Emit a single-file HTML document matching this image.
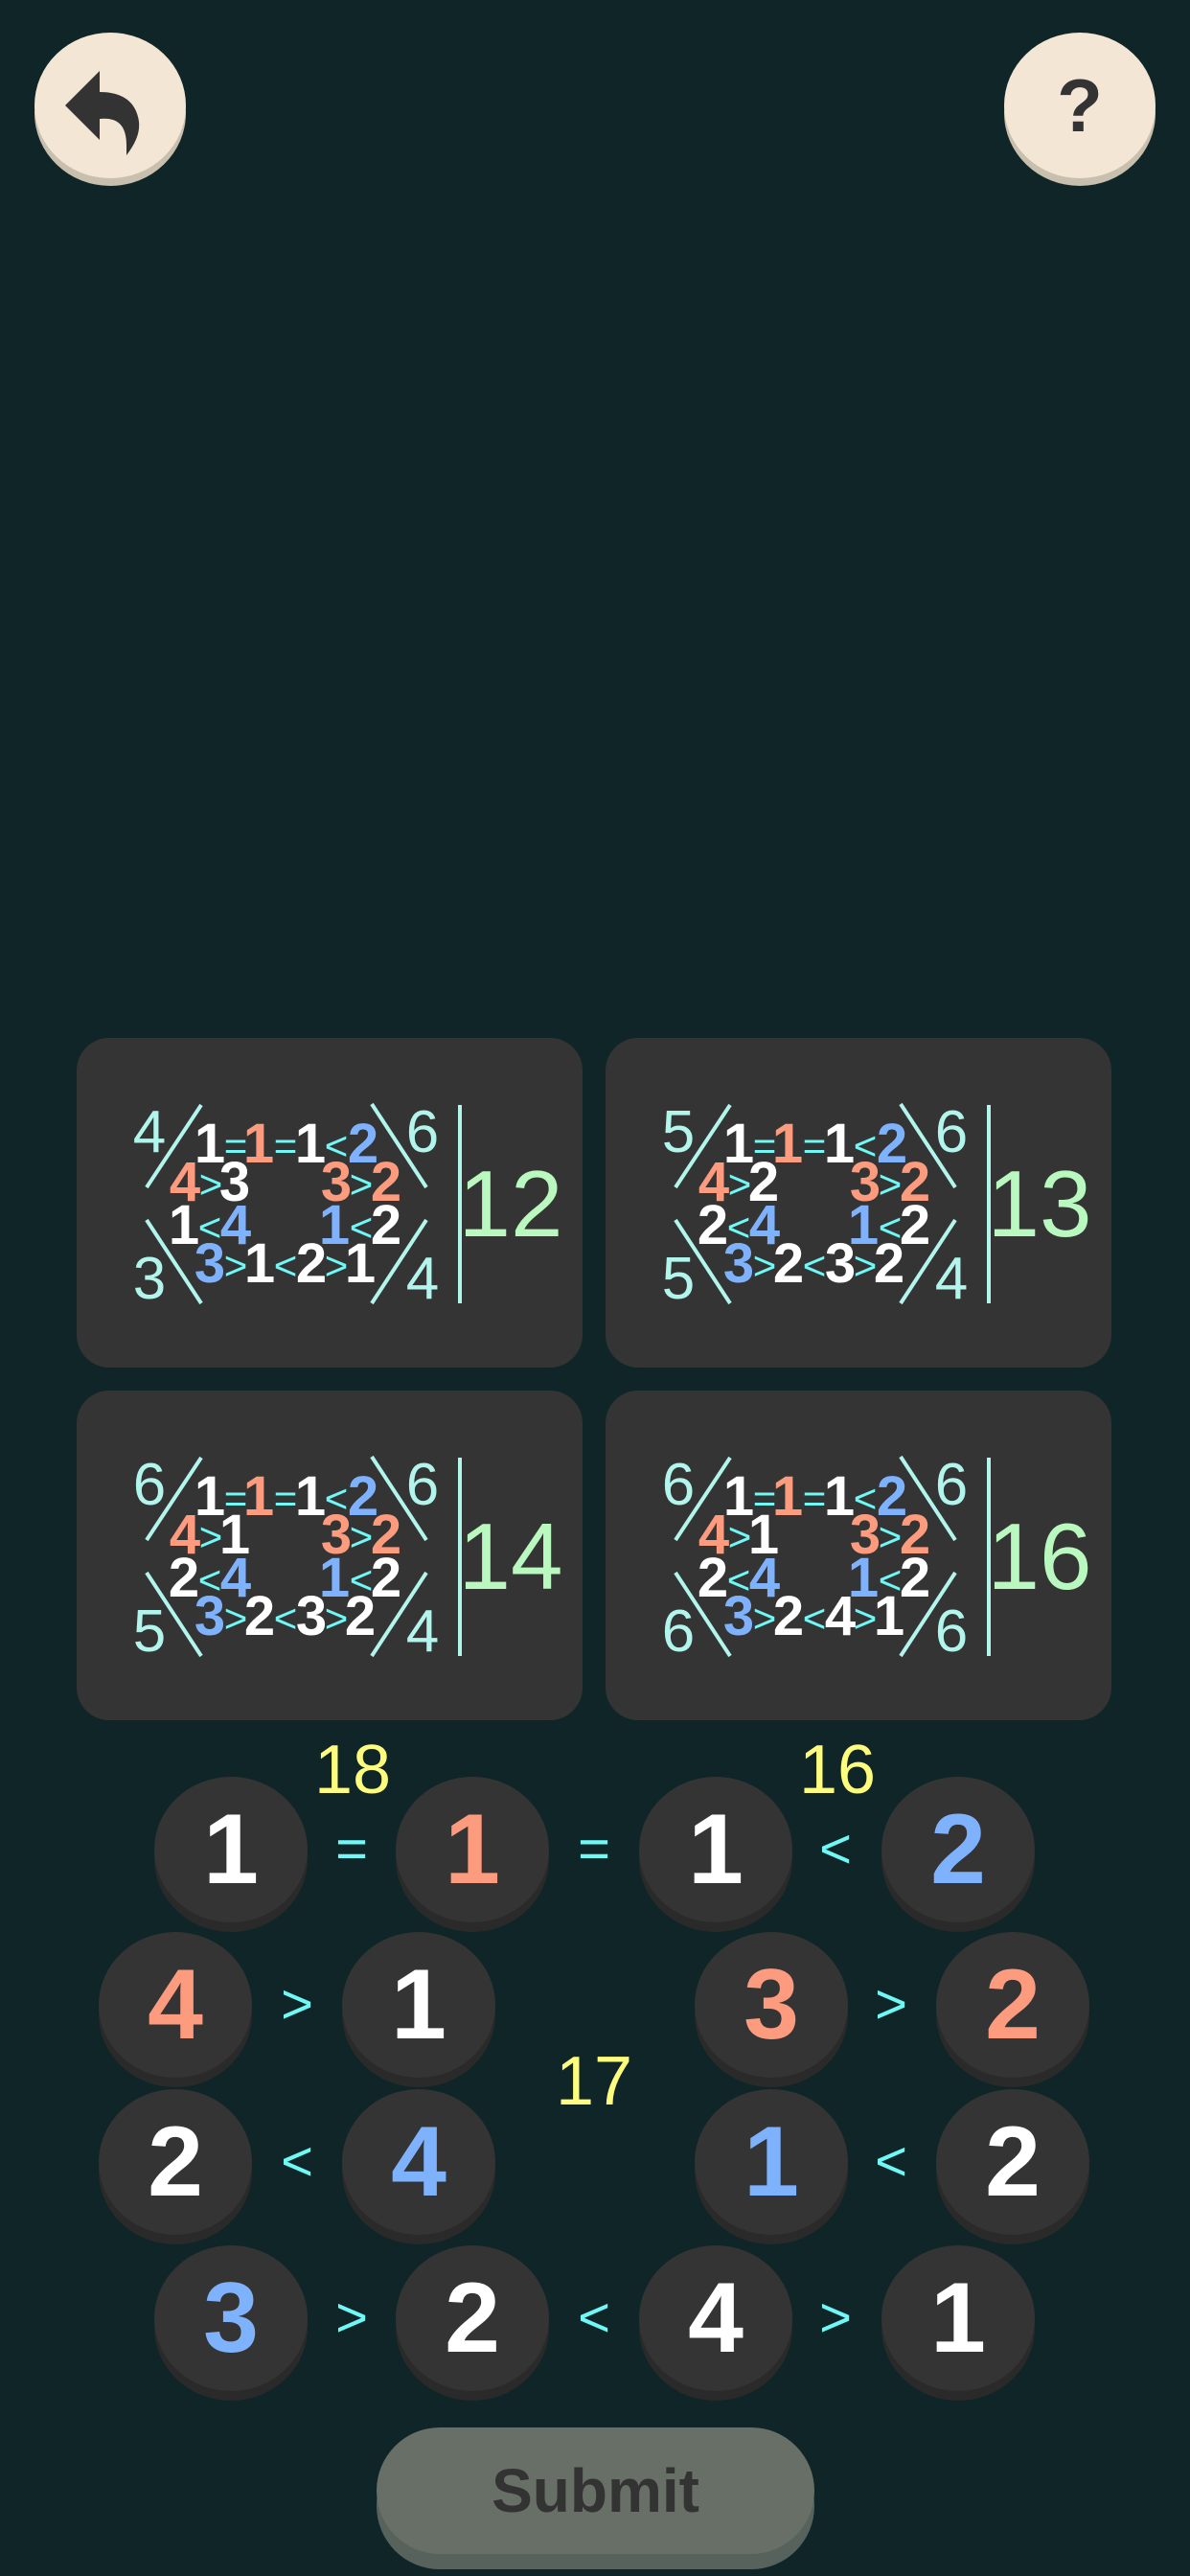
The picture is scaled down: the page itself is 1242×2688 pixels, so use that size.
<!DOCTYPE html>
<html><head><meta charset="utf-8"><style>
html,body{margin:0;padding:0;background:#0f2527;}
body{width:1242px;height:2688px;position:relative;overflow:hidden;font-family:"Liberation Sans",sans-serif;}
.tb{position:absolute;width:158px;height:160px;}
.tb .s{position:absolute;left:0;top:8px;width:158px;height:152px;border-radius:50%;background:#c8bfae;}
.tb .m{position:absolute;left:0;top:0;width:158px;height:152px;border-radius:50%;background:#f3e6d5;}
.card{position:absolute;width:528px;height:344px;border-radius:34px;background:#343434;}
.card svg{position:absolute;left:0;top:0;}
.c{position:absolute;width:160px;height:162px;}
.c .s{position:absolute;left:0;top:10px;width:160px;height:152px;border-radius:50%;background:#2a2a2a;}
.c .m{position:absolute;left:0;top:0;width:160px;height:152px;border-radius:50%;background:#343434;font-weight:bold;font-size:104px;line-height:152px;text-align:center;}
.op{position:absolute;color:#6ff8f5;font-size:58px;width:80px;text-align:center;line-height:60px;}
.y{position:absolute;color:#fdfc7d;font-size:72px;width:120px;text-align:center;line-height:72px;}
.w{color:#fff}.o{color:#fd9b7f}.b{color:#7fb2fd}
</style></head><body>

<div class="tb" style="left:36px;top:34px"><div class="s"></div><div class="m"></div>
<svg style="position:absolute;left:0;top:0" width="158" height="152" viewBox="0 0 158 152">
<path d="M68 40 L32 76 L68 112 L68 90 C88 88 96 98 96 118 L96 128 C110 110 112 96 106 82 C100 68 86 62 68 62 Z" fill="#333"/>
</svg></div>
<div class="tb" style="left:1048px;top:34px"><div class="s"></div><div class="m" style="text-align:center;font-weight:bold;font-size:78px;line-height:152px;color:#333">?</div></div>

<div class="card" style="left:80px;top:1083px">
<svg width="528" height="344"><g stroke="#b2f5ec" stroke-width="4"><line x1="130" y1="70" x2="73" y2="156"/><line x1="308" y1="69" x2="365" y2="156"/><line x1="73" y1="190" x2="130" y2="277"/><line x1="365" y1="190" x2="308" y2="277"/><line x1="400" y1="70" x2="400" y2="277"/></g>
<g font-family="Liberation Sans" text-anchor="middle"><g fill="#b2f5ec" font-size="62"><text x="76" y="119">4</text><text x="361" y="119">6</text><text x="76" y="272">3</text><text x="361" y="272">4</text></g>
<text x="453" y="207" font-size="98" fill="#b9f8bf">12</text>
<g font-size="58" font-weight="bold"><text x="139" y="130" fill="#fff">1</text><text x="190" y="130" fill="#fd9b7f">1</text><text x="244" y="130" fill="#fff">1</text><text x="299" y="130" fill="#7fb2fd">2</text>
<text x="113" y="170" fill="#fd9b7f">4</text><text x="165" y="170" fill="#fff">3</text><text x="271" y="170" fill="#fd9b7f">3</text><text x="323" y="170" fill="#fd9b7f">2</text>
<text x="112" y="215" fill="#fff">1</text><text x="166" y="215" fill="#7fb2fd">4</text><text x="269" y="215" fill="#7fb2fd">1</text><text x="323" y="215" fill="#fff">2</text>
<text x="139" y="255" fill="#7fb2fd">3</text><text x="191" y="255" fill="#fff">1</text><text x="245" y="255" fill="#fff">2</text><text x="296" y="255" fill="#fff">1</text></g>
<g font-size="42" fill="#6ff8f5"><text x="166" y="127">=</text><text x="218" y="127">=</text><text x="271" y="127">&lt;</text><text x="140" y="167">&gt;</text><text x="297" y="167">&gt;</text><text x="139" y="212">&lt;</text><text x="297" y="212">&lt;</text><text x="166" y="252">&gt;</text><text x="218" y="252">&lt;</text><text x="271" y="252">&gt;</text></g></g></svg></div>

<div class="card" style="left:632px;top:1083px">
<svg width="528" height="344"><g stroke="#b2f5ec" stroke-width="4"><line x1="130" y1="70" x2="73" y2="156"/><line x1="308" y1="69" x2="365" y2="156"/><line x1="73" y1="190" x2="130" y2="277"/><line x1="365" y1="190" x2="308" y2="277"/><line x1="400" y1="70" x2="400" y2="277"/></g>
<g font-family="Liberation Sans" text-anchor="middle"><g fill="#b2f5ec" font-size="62"><text x="76" y="119">5</text><text x="361" y="119">6</text><text x="76" y="272">5</text><text x="361" y="272">4</text></g>
<text x="453" y="207" font-size="98" fill="#b9f8bf">13</text>
<g font-size="58" font-weight="bold"><text x="139" y="130" fill="#fff">1</text><text x="190" y="130" fill="#fd9b7f">1</text><text x="244" y="130" fill="#fff">1</text><text x="299" y="130" fill="#7fb2fd">2</text>
<text x="113" y="170" fill="#fd9b7f">4</text><text x="165" y="170" fill="#fff">2</text><text x="271" y="170" fill="#fd9b7f">3</text><text x="323" y="170" fill="#fd9b7f">2</text>
<text x="112" y="215" fill="#fff">2</text><text x="166" y="215" fill="#7fb2fd">4</text><text x="269" y="215" fill="#7fb2fd">1</text><text x="323" y="215" fill="#fff">2</text>
<text x="139" y="255" fill="#7fb2fd">3</text><text x="191" y="255" fill="#fff">2</text><text x="245" y="255" fill="#fff">3</text><text x="296" y="255" fill="#fff">2</text></g>
<g font-size="42" fill="#6ff8f5"><text x="166" y="127">=</text><text x="218" y="127">=</text><text x="271" y="127">&lt;</text><text x="140" y="167">&gt;</text><text x="297" y="167">&gt;</text><text x="139" y="212">&lt;</text><text x="297" y="212">&lt;</text><text x="166" y="252">&gt;</text><text x="218" y="252">&lt;</text><text x="271" y="252">&gt;</text></g></g></svg></div>

<div class="card" style="left:80px;top:1451px">
<svg width="528" height="344"><g stroke="#b2f5ec" stroke-width="4"><line x1="130" y1="70" x2="73" y2="156"/><line x1="308" y1="69" x2="365" y2="156"/><line x1="73" y1="190" x2="130" y2="277"/><line x1="365" y1="190" x2="308" y2="277"/><line x1="400" y1="70" x2="400" y2="277"/></g>
<g font-family="Liberation Sans" text-anchor="middle"><g fill="#b2f5ec" font-size="62"><text x="76" y="119">6</text><text x="361" y="119">6</text><text x="76" y="272">5</text><text x="361" y="272">4</text></g>
<text x="453" y="207" font-size="98" fill="#b9f8bf">14</text>
<g font-size="58" font-weight="bold"><text x="139" y="130" fill="#fff">1</text><text x="190" y="130" fill="#fd9b7f">1</text><text x="244" y="130" fill="#fff">1</text><text x="299" y="130" fill="#7fb2fd">2</text>
<text x="113" y="170" fill="#fd9b7f">4</text><text x="165" y="170" fill="#fff">1</text><text x="271" y="170" fill="#fd9b7f">3</text><text x="323" y="170" fill="#fd9b7f">2</text>
<text x="112" y="215" fill="#fff">2</text><text x="166" y="215" fill="#7fb2fd">4</text><text x="269" y="215" fill="#7fb2fd">1</text><text x="323" y="215" fill="#fff">2</text>
<text x="139" y="255" fill="#7fb2fd">3</text><text x="191" y="255" fill="#fff">2</text><text x="245" y="255" fill="#fff">3</text><text x="296" y="255" fill="#fff">2</text></g>
<g font-size="42" fill="#6ff8f5"><text x="166" y="127">=</text><text x="218" y="127">=</text><text x="271" y="127">&lt;</text><text x="140" y="167">&gt;</text><text x="297" y="167">&gt;</text><text x="139" y="212">&lt;</text><text x="297" y="212">&lt;</text><text x="166" y="252">&gt;</text><text x="218" y="252">&lt;</text><text x="271" y="252">&gt;</text></g></g></svg></div>

<div class="card" style="left:632px;top:1451px">
<svg width="528" height="344"><g stroke="#b2f5ec" stroke-width="4"><line x1="130" y1="70" x2="73" y2="156"/><line x1="308" y1="69" x2="365" y2="156"/><line x1="73" y1="190" x2="130" y2="277"/><line x1="365" y1="190" x2="308" y2="277"/><line x1="400" y1="70" x2="400" y2="277"/></g>
<g font-family="Liberation Sans" text-anchor="middle"><g fill="#b2f5ec" font-size="62"><text x="76" y="119">6</text><text x="361" y="119">6</text><text x="76" y="272">6</text><text x="361" y="272">6</text></g>
<text x="453" y="207" font-size="98" fill="#b9f8bf">16</text>
<g font-size="58" font-weight="bold"><text x="139" y="130" fill="#fff">1</text><text x="190" y="130" fill="#fd9b7f">1</text><text x="244" y="130" fill="#fff">1</text><text x="299" y="130" fill="#7fb2fd">2</text>
<text x="113" y="170" fill="#fd9b7f">4</text><text x="165" y="170" fill="#fff">1</text><text x="271" y="170" fill="#fd9b7f">3</text><text x="323" y="170" fill="#fd9b7f">2</text>
<text x="112" y="215" fill="#fff">2</text><text x="166" y="215" fill="#7fb2fd">4</text><text x="269" y="215" fill="#7fb2fd">1</text><text x="323" y="215" fill="#fff">2</text>
<text x="139" y="255" fill="#7fb2fd">3</text><text x="191" y="255" fill="#fff">2</text><text x="245" y="255" fill="#fff">4</text><text x="296" y="255" fill="#fff">1</text></g>
<g font-size="42" fill="#6ff8f5"><text x="166" y="127">=</text><text x="218" y="127">=</text><text x="271" y="127">&lt;</text><text x="140" y="167">&gt;</text><text x="297" y="167">&gt;</text><text x="139" y="212">&lt;</text><text x="297" y="212">&lt;</text><text x="166" y="252">&gt;</text><text x="218" y="252">&lt;</text><text x="271" y="252">&gt;</text></g></g></svg></div>

<div class="y" style="left:308px;top:1811px">18</div>
<div class="y" style="left:814px;top:1811px">16</div>
<div class="y" style="left:560px;top:2136px">17</div>

<div class="c" style="left:161px;top:1854px"><div class="s"></div><div class="m w">1</div></div>
<div class="c" style="left:413px;top:1854px"><div class="s"></div><div class="m o">1</div></div>
<div class="c" style="left:667px;top:1854px"><div class="s"></div><div class="m w">1</div></div>
<div class="c" style="left:920px;top:1854px"><div class="s"></div><div class="m b">2</div></div>
<div class="op" style="left:327px;top:1900px">=</div>
<div class="op" style="left:580px;top:1900px">=</div>
<div class="op" style="left:832px;top:1900px">&lt;</div>
<div class="c" style="left:103px;top:2016px"><div class="s"></div><div class="m o">4</div></div>
<div class="c" style="left:357px;top:2016px"><div class="s"></div><div class="m w">1</div></div>
<div class="c" style="left:725px;top:2016px"><div class="s"></div><div class="m o">3</div></div>
<div class="c" style="left:977px;top:2016px"><div class="s"></div><div class="m o">2</div></div>
<div class="op" style="left:270px;top:2062px">&gt;</div>
<div class="op" style="left:890px;top:2062px">&gt;</div>
<div class="c" style="left:103px;top:2180px"><div class="s"></div><div class="m w">2</div></div>
<div class="c" style="left:357px;top:2180px"><div class="s"></div><div class="m b">4</div></div>
<div class="c" style="left:725px;top:2180px"><div class="s"></div><div class="m b">1</div></div>
<div class="c" style="left:977px;top:2180px"><div class="s"></div><div class="m w">2</div></div>
<div class="op" style="left:270px;top:2226px">&lt;</div>
<div class="op" style="left:890px;top:2226px">&lt;</div>
<div class="c" style="left:161px;top:2343px"><div class="s"></div><div class="m b">3</div></div>
<div class="c" style="left:413px;top:2343px"><div class="s"></div><div class="m w">2</div></div>
<div class="c" style="left:667px;top:2343px"><div class="s"></div><div class="m w">4</div></div>
<div class="c" style="left:920px;top:2343px"><div class="s"></div><div class="m w">1</div></div>
<div class="op" style="left:327px;top:2389px">&gt;</div>
<div class="op" style="left:580px;top:2389px">&lt;</div>
<div class="op" style="left:832px;top:2389px">&gt;</div>

<div style="position:absolute;left:393px;top:2548px;width:457px;height:133px;border-radius:66px;background:#58625c"></div>
<div style="position:absolute;left:393px;top:2533px;width:457px;height:132px;border-radius:66px;background:#676f67;text-align:center;line-height:132px;font-weight:bold;font-size:64px;color:#333">Submit</div>
</body></html>
